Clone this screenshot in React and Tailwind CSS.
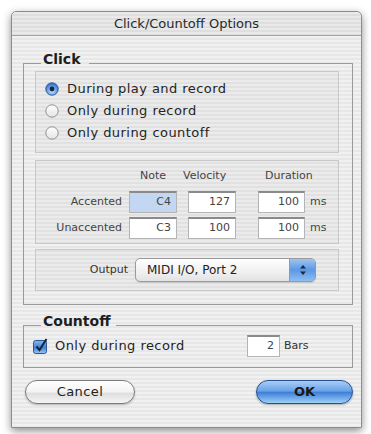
import React from 'react';

const font = { fontFamily: '"DejaVu Sans", "Liberation Sans", sans-serif' };

const Radio = ({ on }) => (
    <svg width="14" height="14" viewBox="0 0 14 14" className="shrink-0">
        <defs>
            <radialGradient id="rb" cx="50%" cy="70%" r="60%">
                <stop offset="0%" stopColor="#bfe0ff" />
                <stop offset="100%" stopColor="#3a78d0" />
            </radialGradient>
            <linearGradient id="rw" x1="0" y1="0" x2="0" y2="1">
                <stop offset="0%" stopColor="#ffffff" />
                <stop offset="100%" stopColor="#e4e4e4" />
            </linearGradient>
        </defs>
        <circle cx="7" cy="7" r="6.2" fill={on ? 'url(#rb)' : 'url(#rw)'} stroke={on ? '#2d5a9c' : '#8f8f8f'} strokeWidth="1" />
        {on && <circle cx="7" cy="7" r="2.4" fill="#14284a" />}
    </svg>
);

const Field = ({ value, w = 'w-[48px]', sel }) => (
    <div className={`${w} h-[22px] flex items-center justify-end pr-[5px] text-[11px] text-[#444] border border-[#b4b4b4] border-t-2 border-t-[#8a8a8a] ${sel ? 'bg-[#c3d7f3]' : 'bg-white'}`}>
        {value}
    </div>
);

const GroupHead = ({ label, rest }) => (
    <div className="flex items-end h-[10px]">
        <div className="w-[18px] h-px bg-[#9a9a9a]" />
        <div className={`pl-[2px] ${rest} text-[14px] leading-[10px] font-bold text-[#1e1e1e]`}>{label}</div>
        <div className="flex-1 h-px bg-[#9a9a9a]" />
    </div>
);

const Panel = ({ className, children }) => (
    <div className={`border border-[#c8c8c8] bg-black/[0.025] ${className}`}>{children}</div>
);

export default function App() {
    return (
        <div className="w-[371px] h-[434px] bg-white pt-[11px] pl-[11px]" style={font}>
            <div className="w-[351px] h-[417px] flex flex-col rounded-t-[5px] border border-[#8c8c8c] bg-[repeating-linear-gradient(180deg,#f1f1f1_0px,#f1f1f1_2px,#e7e7e7_2px,#e7e7e7_4px)] shadow-[0_3px_9px_rgba(0,0,0,0.45)]">
                <div className="h-[24px] shrink-0 flex items-center justify-center rounded-t-[5px] border-b border-[#a3a3a3] bg-[repeating-linear-gradient(180deg,#e9e9e9_0px,#e9e9e9_2px,#dedede_2px,#dedede_4px)] text-[13px] text-[#2a2a2a]">
                    Click/Countoff Options
                </div>

                <div className="ml-[11px] w-[330px] mt-[18px]">
                    <GroupHead label="Click" rest="pr-[9px]" />
                    <div className="border-x border-b border-[#9a9a9a] pl-[11px] pr-[13px] pt-[7px] pb-[13px]">
                        <Panel className="pl-[9px] pt-[6px] pb-[8px]">
                            {['During play and record', 'Only during record', 'Only during countoff'].map((t, i) => (
                                <div key={t} className="h-[22px] flex items-center gap-[8px] text-[13px] tracking-[0.45px] text-[#242424]">
                                    <Radio on={i === 0} />
                                    <span>{t}</span>
                                </div>
                            ))}
                        </Panel>

                        <Panel className="mt-[7px] pt-[8px] pb-[4px] text-[11px] text-[#444]">
                            <div className="flex h-[14px] items-center">
                                <div className="w-[104px]" />
                                <div className="w-[43px]">Note</div>
                                <div className="w-[82px]">Velocity</div>
                                <div>Duration</div>
                            </div>
                            {[['Accented', 'C4', '127', true], ['Unaccented', 'C3', '100', false]].map(([label, note, vel, sel], i) => (
                                <div key={label} className={`flex items-center ${i === 0 ? 'mt-[8px]' : 'mt-[4px]'}`}>
                                    <div className="w-[86px] text-right">{label}</div>
                                    <div className="ml-[7px]"><Field value={note} sel={sel} /></div>
                                    <div className="ml-[11px]"><Field value={vel} /></div>
                                    <div className="ml-[22px]"><Field value="100" w="w-[47px]" /></div>
                                    <div className="ml-[5px]">ms</div>
                                </div>
                            ))}
                        </Panel>

                        <Panel className="mt-[5px] pt-[8px] pb-[8px] flex items-center">
                            <div className="w-[92px] text-right text-[11px] text-[#333]">Output</div>
                            <div className="ml-[7px] w-[181px] h-[24px] flex rounded-[5px] border border-[#9a9a9a] bg-[linear-gradient(180deg,#ffffff,#f0f0f0_60%,#e2e2e2)] shadow-[0_1px_1px_rgba(0,0,0,0.12)]">
                                <div className="flex-1 flex items-center pl-[11px] text-[12px] text-[#222]">MIDI I/O, Port 2</div>
                                <div className="w-[26px] flex items-center justify-center rounded-r-[4px] border-l border-[#7a9cc8] bg-[linear-gradient(180deg,#9cc4f2,#5d98e4_50%,#8dbdf2)]">
                                    <svg width="8" height="14" viewBox="0 0 8 14">
                                        <path d="M1 5.5 L4 2 L7 5.5 Z" fill="#1b2a44" />
                                        <path d="M1 8.5 L4 12 L7 8.5 Z" fill="#1b2a44" />
                                    </svg>
                                </div>
                            </div>
                        </Panel>
                    </div>
                </div>

                <div className="ml-[11px] w-[330px] mt-[11px]">
                    <GroupHead label="Countoff" rest="pr-[6px]" />
                    <div className="border-x border-b border-[#9a9a9a] pl-[9px] pt-[9px] pb-[10px] flex items-center">
                        <svg width="15" height="16" viewBox="0 0 15 16" className="shrink-0">
                            <defs>
                                <linearGradient id="cb" x1="0" y1="0" x2="0" y2="1">
                                    <stop offset="0%" stopColor="#8ab8ee" />
                                    <stop offset="55%" stopColor="#3f7fd6" />
                                    <stop offset="100%" stopColor="#9cc8f4" />
                                </linearGradient>
                            </defs>
                            <rect x="0.5" y="2.5" width="13" height="13" rx="2" fill="url(#cb)" stroke="#2b5797" />
                            <path d="M3.5 8.5 L6.5 12 L13.5 1" fill="none" stroke="#142236" strokeWidth="2" />
                        </svg>
                        <span className="ml-[7px] w-[192px] text-[13px] tracking-[0.45px] text-[#242424]">Only during record</span>
                        <Field value="2" w="w-[33px]" />
                        <span className="ml-[4px] text-[11px] text-[#333]">Bars</span>
                    </div>
                </div>

                <div className="ml-[13px] w-[328px] mt-[12px] flex justify-between">
                    <button className="w-[110px] h-[24px] rounded-full border border-[#7c7c7c] bg-[linear-gradient(180deg,#ffffff,#f3f3f3_50%,#dedede_55%,#f4f4f4)] text-[13px] tracking-[0.4px] text-[#222] shadow-[0_1px_2px_rgba(0,0,0,0.25)]">
                        Cancel
                    </button>
                    <button className="w-[97px] h-[24px] rounded-full border border-[#25508f] bg-[linear-gradient(180deg,#a9cdf5,#6aa3ea_45%,#3f7fd8_52%,#9ed0f8)] text-[13px] font-bold text-[#1a1a1a] shadow-[0_1px_2px_rgba(0,0,0,0.3)]">
                        OK
                    </button>
                </div>
            </div>
        </div>
    );
}
